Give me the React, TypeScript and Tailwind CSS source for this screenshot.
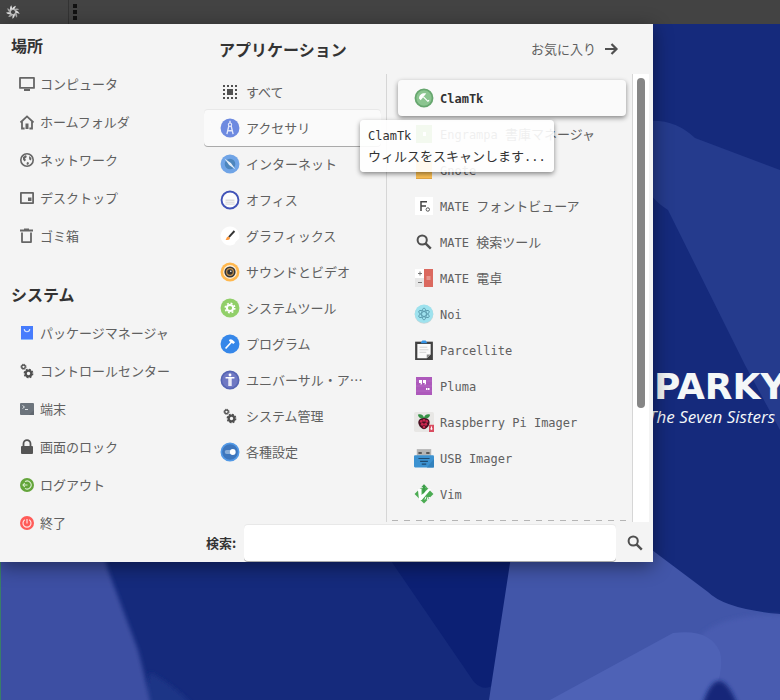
import type { ReactNode } from "react";
import clsx from "clsx";

interface Entry {
  icon: ReactNode;
  latin?: string;
  label?: string;
}

function Svg({ children, size = 18 }: { children: ReactNode; size?: 14 | 16 | 18 | 20 }) {
  return (
    <svg width={size} height={size} viewBox="0 0 18 18" fill="none" aria-hidden="true" className="shrink-0">
      {children}
    </svg>
  );
}

/* ── Shared icons ── */
const Gears = () => (
  <Svg>
    <g stroke="#505050">
      <circle cx="5.5" cy="4.8" r="1.8" strokeWidth="1.3" />
      <circle cx="5.5" cy="4.8" r="2.600" strokeWidth="1" strokeDasharray="1.100 .942" />
      <circle cx="10.5" cy="11.5" r="2.800" strokeWidth="2.200" />
      <circle cx="10.5" cy="11.5" r="4.200" strokeWidth="1.400" strokeDasharray="1.800 1.500" />
    </g>
  </Svg>
);

const Magnifier = () => (
  <Svg>
    <circle cx="7.2" cy="7" r="4.600" stroke="#505050" strokeWidth="2" />
    <path d="M10.5 10.3 15.8 15.600" stroke="#505050" strokeWidth="2.4" />
  </Svg>
);

/* ── Sidebar ── */
const PLACES: Entry[] = [
  {
    label: "コンピュータ",
    icon: (
      <Svg>
        <path d="M2 2.9h14v10H2z" stroke="#666" strokeWidth="1.8" strokeLinejoin="round" />
        <path d="M6 14h6v2H6z" fill="#666" />
      </Svg>
    ),
  },
  {
    label: "ホームフォルダ",
    icon: (
      <Svg>
        <path d="M2.5 9.5 9 3.4l6.500 6.100M4 8v7.500h2.600M14 8v7.500h-2.600" stroke="#666" strokeWidth="1.8" />
        <path d="M7.500 10.500h3V16h-3z" fill="#666" />
      </Svg>
    ),
  },
  {
    label: "ネットワーク",
    icon: (
      <Svg>
        <circle cx="9" cy="9" r="6.200" stroke="#666" strokeWidth="1.600" />
        <path d="m5 6 3-2 .800 2L7 7.500 8 9l-1.500 1.500L5 8.500zM11 5l2.500 2-.500 2.500-1.800-1zM9 11l2.200.800-1.200 2.200-1.500-.800z" fill="#666" />
      </Svg>
    ),
  },
  {
    label: "デスクトップ",
    icon: (
      <Svg>
        <path d="M2.900 3.900h12.200v10.200H2.900z" stroke="#666" strokeWidth="1.800" strokeLinejoin="round" />
        <path d="M10 8.500h3.500V12H10z" fill="#666" />
      </Svg>
    ),
  },
  {
    label: "ゴミ箱",
    icon: (
      <Svg>
        <path d="M2 3.500h13M6 2.500h5M4 5.500v9.600h9V5.500" stroke="#666" strokeWidth="1.800" strokeLinejoin="round" />
      </Svg>
    ),
  },
];

const SYSTEM: Entry[] = [
  {
    label: "パッケージマネージャ",
    icon: (
      <Svg>
        <path d="M3 2h12v13H3z" fill="#467cfd" />
        <path d="M3 15h12v.900H3z" fill="#80b3ff" />
        <path d="M6.300 5c0 3.600 5.400 3.600 5.400 0" stroke="#d5e4ff" strokeWidth="1.100" />
      </Svg>
    ),
  },
  { label: "コントロールセンター", icon: <Gears /> },
  {
    label: "端末",
    icon: (
      <Svg>
        <rect x="2" y="3" width="14" height="12" rx="1" fill="#6c747c" />
        <path d="m16 10-5 5h5z" fill="#60676f" />
        <path d="m4.500 5.500 2 1.500-2 1.500M7 9.500h3" stroke="#dfe3e6" />
      </Svg>
    ),
  },
  {
    label: "画面のロック",
    icon: (
      <Svg>
        <rect x="3" y="8" width="12" height="8" rx="1" fill="#555" />
        <path d="M5.500 8V5.700a3.500 3.500 0 0 1 7 0V8" stroke="#555" strokeWidth="1.800" />
      </Svg>
    ),
  },
  {
    label: "ログアウト",
    icon: (
      <Svg>
        <circle cx="9" cy="9" r="7" fill="#64a53b" />
        <path d="M7 5.600a4 4 0 1 1 0 6.800M5 9h4.500M6.800 7 5 9l1.800 2" stroke="#dcefd2" strokeWidth="1.100" />
      </Svg>
    ),
  },
  {
    label: "終了",
    icon: (
      <Svg>
        <circle cx="9" cy="9" r="7" fill="#ff5b58" />
        <path d="M6.800 5.800a4 4 0 1 0 4.400 0M9 5v4.500" stroke="#ffe0df" strokeWidth="1.200" />
      </Svg>
    ),
  },
];

/* ── Categories ── */
const CATEGORIES: Entry[] = [
  {
    label: "すべて",
    icon: (
      <Svg>
        <path d="M6 6h6v6H6z" fill="#505050" />
        <path
          d="M2 3h14M2 15h14"
          stroke="#505050"
          strokeWidth="2"
          strokeDasharray="2 2"
        />
        <path d="M3 6v2M3 10v2M15 6v2M15 10v2" stroke="#505050" strokeWidth="2" />
      </Svg>
    ),
  },
  {
    label: "アクセサリ",
    icon: (
      <Svg size={20}>
        <circle cx="9" cy="9" r="8.500" fill="#6d8ae0" />
        <path d="M9 2.500V5M8 7 6.200 14.500M10 7l1.800 7.500M6.500 11.500h5" stroke="#e4e9fb" strokeWidth="1.200" />
        <circle cx="9" cy="6" r="1.500" stroke="#e4e9fb" />
      </Svg>
    ),
  },
  {
    label: "インターネット",
    icon: (
      <Svg size={20}>
        <circle cx="9" cy="9" r="8.500" fill="#70a4e6" />
        <circle cx="9" cy="9" r="4.800" fill="#4d86bd" />
        <path d="m4 4 5.800 4.200L14 14 8.200 9.800z" fill="#e6effa" />
      </Svg>
    ),
  },
  {
    label: "オフィス",
    icon: (
      <Svg size={20}>
        <circle cx="9" cy="9" r="7.600" fill="#fcfcfc" stroke="#4153b7" strokeWidth="1.700" />
        <path d="M5 8.500h8v5H5z" fill="#dedede" />
        <path d="M5 10.500h8M5 12.500h8" stroke="#fff" strokeWidth=".600" />
      </Svg>
    ),
  },
  {
    label: "グラフィックス",
    icon: (
      <Svg size={20}>
        <path d="M9 .500a8.500 8.500 0 1 0 4 16l1-2 3-3A8.500 8.500 0 0 0 9 .500z" fill="#fff" />
        <path d="m13 4.500-5 5.500" stroke="#333" strokeWidth="1.700" />
        <path d="M7.500 9.500 9 11c0 1.500-2 1.500-4 1.500C6 11.500 5.700 9.800 7.500 9.500z" fill="#ff9a3d" />
      </Svg>
    ),
  },
  {
    label: "サウンドとビデオ",
    icon: (
      <Svg size={20}>
        <circle cx="9" cy="9" r="8.500" fill="#ffb84f" />
        <circle cx="9" cy="9" r="6.200" fill="#fff0da" />
        <circle cx="9" cy="9" r="4.300" fill="#c58f48" stroke="#353738" strokeWidth="1.500" />
        <circle cx="9" cy="9" r="2.500" fill="#333" />
        <circle cx="9.700" cy="8.300" r=".700" fill="#fff" />
      </Svg>
    ),
  },
  {
    label: "システムツール",
    icon: (
      <Svg size={20}>
        <circle cx="9" cy="9" r="8.500" fill="#91cf69" />
        <circle cx="9" cy="9" r="2.800" stroke="#fff" strokeWidth="1.800" />
        <circle cx="9" cy="9" r="4.300" stroke="#fff" strokeWidth="1.400" strokeDasharray="1.700 1.680" />
      </Svg>
    ),
  },
  {
    label: "プログラム",
    icon: (
      <Svg size={20}>
        <circle cx="9" cy="9" r="8.500" fill="#3687e9" />
        <path d="m5 13 6-6.500" stroke="#fff" strokeWidth="1.500" />
        <path d="M8 5.300c2-1 3-.500 5.500 2.200L12 9 8.500 6.500z" fill="#fff" />
      </Svg>
    ),
  },
  {
    label: "ユニバーサル・ア…",
    icon: (
      <Svg size={20}>
        <circle cx="9" cy="9" r="7.800" fill="#6f78c3" stroke="#5665b4" strokeWidth="1.500" />
        <circle cx="9" cy="4.500" r="1.300" fill="#fff" />
        <path d="M5 6.900h8M8.200 7v7.500M9.800 7v7.500" stroke="#fff" strokeWidth="1.300" />
      </Svg>
    ),
  },
  { label: "システム管理", icon: <Gears /> },
  {
    label: "各種設定",
    icon: (
      <Svg size={20}>
        <circle cx="9" cy="9" r="7.800" fill="#3d76bd" stroke="#5299e6" strokeWidth="1.500" />
        <path d="M6 9h6" stroke="#87add9" strokeWidth="3.500" strokeLinecap="round" />
        <circle cx="11.500" cy="9" r="2.600" fill="#fff" />
      </Svg>
    ),
  },
];

/* ── Applications ── */
const APPS: Entry[] = [
  {
    latin: "ClamTk",
    icon: (
      <Svg size={20}>
        <circle cx="9" cy="9" r="7.700" fill="#8bc590" stroke="#66a66e" strokeWidth="1.600" />
        <path d="M4.500 9.500C4.500 6 7.500 4.200 11 5L6 11z" fill="#fff" />
        <path d="m8.500 8 4 4c.600-.400.800-.700.700-1.300" stroke="#fff" strokeWidth="1.100" />
      </Svg>
    ),
  },
  {
    latin: "Engrampa",
    label: "書庫マネージャ",
    icon: (
      <Svg>
        <path d="M1 0h16v18H1z" fill="#8ac763" />
        <path d="M8 7h3v4H8z" fill="#fff" />
      </Svg>
    ),
  },
  {
    latin: "Gnote",
    icon: (
      <Svg>
        <path d="M1 0h16v18H1z" fill="#fbbf52" />
        <path d="M1 17h16v1H1z" fill="#dfa545" />
      </Svg>
    ),
  },
  {
    latin: "MATE",
    label: "フォントビューア",
    icon: (
      <Svg>
        <path d="M0 0h18v18H0z" fill="#fff" />
        <path d="M6 14V4.700h6M6 9h5" stroke="#444" strokeWidth="1.500" />
        <circle cx="12.800" cy="12.500" r="1.700" stroke="#555" />
      </Svg>
    ),
  },
  { latin: "MATE", label: "検索ツール", icon: <Magnifier /> },
  {
    latin: "MATE",
    label: "電卓",
    icon: (
      <Svg>
        <path d="M0 0h9v9H0z" fill="#fff" />
        <path d="M0 9h9v9H0z" fill="#e7e7e7" />
        <path d="M9 0h9v18H9z" fill="#db695f" />
        <path d="M3 4.500h4M5 2.500v4M3 13.500h4" stroke="#777" />
        <path d="M11.500 8h4M11.500 10h4" stroke="#f3c4bf" />
      </Svg>
    ),
  },
  {
    latin: "Noi",
    icon: (
      <Svg size={20}>
        <circle cx="9" cy="9.300" r="8.400" fill="#c4d4d7" />
        <circle cx="9" cy="8.800" r="8.300" fill="#9ee2ee" />
        <g stroke="#5a9aac" strokeWidth=".800">
          <ellipse cx="9" cy="9" rx="5.300" ry="2.100" transform="rotate(30 9 9)" />
          <ellipse cx="9" cy="9" rx="5.300" ry="2.100" transform="rotate(90 9 9)" />
          <ellipse cx="9" cy="9" rx="5.300" ry="2.100" transform="rotate(150 9 9)" />
        </g>
      </Svg>
    ),
  },
  {
    latin: "Parcellite",
    icon: (
      <Svg size={20}>
        <path d="M1 1.500h16V18H1z" fill="#414141" />
        <path d="M3 3.500h12V13l-3.500 3.500H3z" fill="#fafafa" />
        <path d="M11.500 16.500V13H15z" fill="#8b8b8b" />
        <path d="M5 6.500h7M5 8.800h8M5 11.100h6" stroke="#d0d0d0" strokeWidth=".800" />
        <path d="M6 3h6L10.500.500h-3z" fill="#3394e8" />
      </Svg>
    ),
  },
  {
    latin: "Pluma",
    icon: (
      <Svg>
        <path d="M1 0h16v18H1z" fill="#ad59bb" />
        <path d="M1 4h16M1 9h16M1 14h16" stroke="#bd76c9" strokeWidth=".600" />
        <path d="M4 3h3v4L5.700 8V6H4zM8 3h3v4L9.700 8V6H8zM11 11h1.500v2H11zM13 11h1.500v2H13z" fill="#fff" />
      </Svg>
    ),
  },
  {
    latin: "Raspberry Pi Imager",
    icon: (
      <Svg size={20}>
        <rect width="18" height="18" rx="1.500" fill="#e8e7e5" />
        <path d="M3.500 2.500C6 1.500 8 2.500 9 5c1-2.500 3-3.500 5.500-2.500C14 5 11.500 6.500 9 6 6.500 6.500 4 5 3.500 2.500z" fill="#359146" />
        <path d="M9 5.500c4 0 5.800 2.500 4.800 5.500C13 13.500 11 15 9 15.500 7 15 5 13.500 4.200 11c-1-3 .800-5.500 4.800-5.500z" fill="#491022" />
        <g fill="#cc2850">
          <circle cx="9" cy="7.500" r="1.300" />
          <circle cx="6.500" cy="8.500" r="1.200" />
          <circle cx="11.500" cy="8.500" r="1.200" />
          <circle cx="7.500" cy="11" r="1.400" />
          <circle cx="10.500" cy="11" r="1.400" />
          <circle cx="9" cy="13.600" r="1.200" />
        </g>
        <path d="M13.500 11.500H18V18h-4.500z" fill="#d94d61" />
        <path d="M15.700 13v3M14.700 15.200h2" stroke="#fff" strokeWidth=".900" />
      </Svg>
    ),
  },
  {
    latin: "USB Imager",
    icon: (
      <Svg size={20}>
        <path d="M2.500 1h13v6h-13z" fill="#b5b5b5" />
        <path d="M4 3.500h3v2H4zM11 3.500h3v2h-3z" fill="#585858" />
        <rect y="6.500" width="18" height="11" rx="1" fill="#3c92d1" />
        <path d="m18 10-6.500 7.500H18z" fill="#3282bd" />
        <path d="M4 9.500h10M5.500 12h7M7 14.500h4" stroke="#1f4b70" />
      </Svg>
    ),
  },
  {
    latin: "Vim",
    icon: (
      <Svg size={20}>
        <path d="m9 .500 8.500 8.500L9 17.500.500 9z" fill="#4bab52" />
        <path d="M3.500 4.500h3.300v5.300l5.700-5.300h3L7 14.500H4.500z" fill="#fff" />
        <path d="m9.800 14 1-2.500M11.800 14.500l.900-2.800M13.600 13l.500-1.300" stroke="#fff" strokeWidth=".900" />
        <path d="M3.500 4.500 9 .500l2.500 2.200L8 3.500z" fill="#f4f4f4" />
        <path d="M9 .300 11.500 3H10v4L8 9V3H6.500z" fill="#3c9e49" />
      </Svg>
    ),
  },
];

function Swirl() {
  return (
    <svg width="14" height="14" viewBox="0 0 14 14" fill="none" aria-hidden="true">
      {[0, 40, 80, 120, 160, 200, 240, 280, 320].map((angle) => (
        <path
          key={angle}
          d="M5.500 4.800C6.500 2.500 8 1 10 .800 9.500 2 9 3 8.300 4.300z"
          fill={angle % 80 === 0 ? "#e0e0e0" : "#a8a8a8"}
          transform={`rotate(${angle} 7 7)`}
        />
      ))}
      <circle cx="7" cy="7" r="2.600" stroke="#c4c4c4" strokeWidth=".900" />
    </svg>
  );
}

function Wallpaper() {
  return (
    <svg
      className="absolute inset-0 size-full"
      viewBox="0 0 780 700"
      preserveAspectRatio="xMinYMin slice"
      aria-hidden="true"
    >
      <defs>
        <filter id="soft" x="-20%" y="-20%" width="140%" height="140%">
          <feGaussianBlur stdDeviation="2" />
        </filter>
      </defs>
      <path d="M0 0h780v700H0z" fill="#152a7c" />
      <path d="M640 122Q672 116 695 138L780 170V430L745 365 668 210Q645 196 640 170z" fill="#253b8d" />
      <path d="M387 555h126l-21 131q-9 5-18-4z" fill="#0c2074" />
      <path d="M150 672q28 16 50 40h-60z" fill="#1f3486" filter="url(#soft)" />
      <path d="M-30 520H95l13 50 30 80q8 30 18 80H-30z" fill="#3d50a3" filter="url(#soft)" />
      <path d="M512 550h140L708 592Q725 609 780 614V700H489z" fill="#4256a9" />
      <path d="M700 636Q725 612 785 616V710H700z" fill="#485cb0" filter="url(#soft)" />
      <path d="M550 700 673 633Q710 628 720 652 725 672 710 700z" fill="#4e62b6" />
      <path d="M702 706q16-50 36 0z" fill="#132779" filter="url(#soft)" />
      <path d="M0 562h1v138H0z" fill="#397d69" />
    </svg>
  );
}

function SideGroup({ title, items }: { title: string; items: Entry[] }) {
  return (
    <section>
      <h2 className="mb-2 pl-[11px] text-base font-bold leading-6 text-[#333]">{title}</h2>
      <ul>
        {items.map(({ icon, label }) => (
          <li key={label}>
            <button className="flex h-[38px] w-full items-center gap-1 pl-[18px] text-left">
              {icon}
              {label}
            </button>
          </li>
        ))}
      </ul>
    </section>
  );
}

function AppName({ latin, label }: Entry) {
  return (
    <span className="whitespace-nowrap">
      {latin && (
        <span className="font-['DejaVu_Sans_Mono',monospace] text-xs">
          {latin}
          {label && " "}
        </span>
      )}
      {label}
    </span>
  );
}

export default function App() {
  return (
    <div className="relative min-h-screen overflow-hidden bg-[#152a7c] font-['Noto_Sans_CJK_JP',sans-serif] text-[13px] leading-5 text-[#606060]">
      <Wallpaper />

      {/* ── Wallpaper branding ── */}
      <div className="absolute left-[628px] top-[367px] whitespace-nowrap text-[#f4f7f8]">
        <p className="font-['DejaVu_Sans',sans-serif] text-4xl font-bold leading-10">SPARKY</p>
        <p className="pl-5 font-['Open_Sans',sans-serif] text-[17px] italic leading-5">The Seven Sisters</p>
      </div>

      {/* ── Top panel ── */}
      <header className="relative flex h-6 items-center bg-[#434343]">
        <button aria-label="メニュー" className="flex h-6 w-[69px] items-center border-r border-[#333] pl-1.5">
          <Swirl />
        </button>
        <div className="flex flex-col gap-0.5 pl-1">
          <span className="size-1 bg-[#111]" />
          <span className="size-1 bg-[#111]" />
          <span className="size-1 bg-[#111]" />
        </div>
      </header>

      {/* ── Menu ── */}
      <main className="relative flex w-full max-w-[653px] bg-[#f4f4f4] shadow-[0_4px_18px_rgba(0,0,0,0.45)]">
        <nav className="flex w-[204px] shrink-0 flex-col gap-[27px] pt-[9px]">
          <SideGroup title="場所" items={PLACES} />
          <SideGroup title="システム" items={SYSTEM} />
        </nav>

        <div className="min-w-0 flex-1">
          <div className="flex h-[50px] items-center justify-between pl-[15px] pr-[33px]">
            <h2 className="text-base font-bold leading-6 text-[#333]">アプリケーション</h2>
            <button className="flex items-center gap-1.5">
              お気に入り
              <Svg>
                <path d="M3 9h11M9.500 4 14.500 9l-5 5" stroke="#505050" strokeWidth="2.200" />
              </Svg>
            </button>
          </div>

          <div className="flex">
            <ul className="w-[182px] shrink-0 pr-[5px]">
              {CATEGORIES.map(({ icon, label }) => (
                <li key={label}>
                  <button
                    className={clsx(
                      "flex h-9 w-full items-center gap-1.5 whitespace-nowrap rounded-sm pl-4 text-left",
                      label === "アクセサリ" && "bg-[#fafafa] shadow-[0_1px_0_#aaa,0_-1px_0_#e8e8e8]",
                    )}
                  >
                    <span className="flex w-5 shrink-0 justify-center">{icon}</span>
                    {label}
                  </button>
                </li>
              ))}
            </ul>

            <div className="flex min-w-0 flex-1 flex-col border-x border-[#d6d6d6] pt-1.5">
              <ul className="pl-[11px] pr-[6px]">
                {APPS.map((app, i) => (
                  <li key={i} className={clsx(i === 0 && "relative")}>
                    <button
                      className={clsx(
                        "flex h-9 w-full items-center gap-1.5 rounded-sm pl-4 text-left",
                        i === 0 && "bg-[#fafafa] font-bold text-[#333] shadow-[0_2px_5px_rgba(0,0,0,0.45)]",
                      )}
                    >
                      <span className="flex w-5 shrink-0 justify-center">{app.icon}</span>
                      <AppName latin={app.latin} label={app.label} />
                    </button>
                    {i === 0 && (
                      <div
                        role="tooltip"
                        className="absolute -left-[38px] top-10 z-10 whitespace-nowrap rounded-sm bg-white/90 px-2 py-1.5 text-[#333] shadow-[0_2px_5px_rgba(0,0,0,0.45)]"
                      >
                        <p className="font-['DejaVu_Sans_Mono',monospace] text-xs leading-5">ClamTk</p>
                        <p>
                          ウィルスをスキャンします
                          <span className="font-['DejaVu_Sans_Mono',monospace] text-xs">...</span>
                        </p>
                      </div>
                    )}
                  </li>
                ))}
              </ul>
              <div className="mx-[5px] mb-px mt-2 h-px bg-[repeating-linear-gradient(90deg,#b5b5b5_0_6px,transparent_6px_12px)]" />
            </div>

            {/* Scroll bar */}
            <div className="mr-1 w-4 bg-white p-1">
              <div className="h-3/4 rounded-full bg-[#868686]" />
            </div>
          </div>

          <form className="flex items-center pb-px pl-0.5 pt-[3px]" onSubmit={(e) => e.preventDefault()}>
            <label htmlFor="search" className="mr-2 font-bold text-[#333]">
              検索:
            </label>
            <input
              id="search"
              type="text"
              className="h-9 min-w-0 flex-1 rounded-sm bg-white px-2 shadow-[0_1px_0_#aaa,0_-1px_0_#e8e8e8] outline-none"
            />
            <button aria-label="検索" className="flex w-[37px] justify-center">
              <Magnifier />
            </button>
          </form>
        </div>
      </main>
    </div>
  );
}
